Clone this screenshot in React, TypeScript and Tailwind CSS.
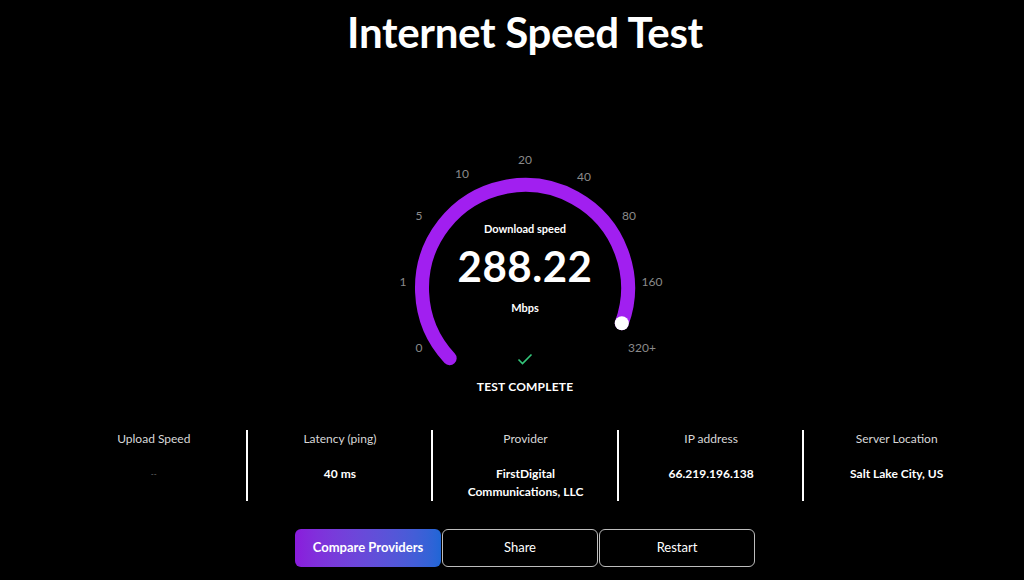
import React from 'react';

const ticks = [
  { label: '0', x: 44, y: 198 },
  { label: '1', x: 28, y: 132 },
  { label: '5', x: 44, y: 66 },
  { label: '10', x: 87, y: 24 },
  { label: '20', x: 150, y: 10 },
  { label: '40', x: 209, y: 27 },
  { label: '80', x: 254, y: 66 },
  { label: '160', x: 277, y: 132 },
  { label: '320+', x: 267, y: 198 },
];

const stats = [
  { label: 'Upload Speed', value: null },
  { label: 'Latency (ping)', value: ['40 ms'] },
  { label: 'Provider', value: ['FirstDigital', 'Communications, LLC'] },
  { label: 'IP address', value: ['66.219.196.138'] },
  { label: 'Server Location', value: ['Salt Lake City, US'] },
];

function Gauge() {
  // arc centre (150,138), radius 103
  const cx = 150;
  const cy = 138;
  const r = 103;
  const a0 = (137 * Math.PI) / 180;
  const a1 = (20 * Math.PI) / 180;
  const sx = cx + r * Math.cos(a0);
  const sy = cy + r * Math.sin(a0);
  const ex = cx + r * Math.cos(a1);
  const ey = cy + r * Math.sin(a1);

  return (
    <div className="relative w-[300px] h-[250px] mt-[94px] flex flex-col items-center">
      <svg className="absolute inset-0" width={300} height={250} viewBox="0 0 300 250">
        <path
          d={`M ${sx} ${sy} A ${r} ${r} 0 1 1 ${ex} ${ey}`}
          fill="none"
          stroke="#a11ff0"
          strokeWidth={14}
          strokeLinecap="round"
        />
        <circle cx={ex} cy={ey} r={7} fill="#fff" />
      </svg>
      {ticks.map((t) => (
        <span
          key={t.label}
          className="absolute -translate-x-1/2 -translate-y-1/2 text-[12px] leading-none text-[#8a8a8a]"
          style={{ left: t.x, top: t.y }}
        >
          {t.label}
        </span>
      ))}
      <p className="relative mt-[70px] text-[11px] leading-[18px] font-bold text-white">Download speed</p>
      <p className="relative mt-[7px] text-[42px] leading-[42px] font-bold text-white tracking-[0.5px]">288.22</p>
      <p className="relative mt-[12px] text-[11px] leading-[18px] font-bold text-white">Mbps</p>
      <svg className="relative mt-[36px]" width={16} height={12} viewBox="0 0 16 12">
        <polyline points="1.5,6.5 5.5,10.5 14.5,1.5" fill="none" stroke="#34c77b" strokeWidth={1.6} />
      </svg>
      <p className="relative mt-[13px] text-[12px] leading-[18px] font-bold text-white tracking-[0.2px]">TEST COMPLETE</p>
    </div>
  );
}

export default function App() {
  return (
    <div
      className="w-[1024px] h-[580px] bg-black text-white overflow-hidden flex flex-col items-center pl-[26px]"
      style={{ fontFamily: 'Lato, "Noto Sans", sans-serif' }}
    >
      <h1 className="pt-[8px] text-[42px] leading-[48px] font-bold tracking-[-0.3px]">Internet Speed Test</h1>

      <Gauge />

      <div className="mt-[30px] h-[70px] w-[928px] grid grid-cols-5">
        {stats.map((s, i) => (
          <div
            key={s.label}
            className={`flex flex-col items-center text-center ${i > 0 ? 'border-l-2 border-white -ml-[1px]' : ''}`}
          >
            <p className="text-[12px] leading-[18px] text-[#d8d8d8]">{s.label}</p>
            <div className="mt-[17px]">
              {s.value ? (
                s.value.map((v) => (
                  <p key={v} className="text-[12px] leading-[18px] font-bold text-white">
                    {v}
                  </p>
                ))
              ) : (
                <p className="text-[8px] leading-[18px] text-[#777]">--</p>
              )}
            </div>
          </div>
        ))}
      </div>

      <div className="mt-[29px] flex gap-[1px]">
        <button className="w-[146px] h-[38px] rounded-[6px] bg-gradient-to-r from-[#8a1bdc] to-[#1f66d6] text-[13px] font-bold text-white">
          Compare Providers
        </button>
        <button className="w-[156px] h-[38px] rounded-[6px] border border-[#bdbdbd] text-[13px] text-white">
          Share
        </button>
        <button className="w-[156px] h-[38px] rounded-[6px] border border-[#bdbdbd] text-[13px] text-white">
          Restart
        </button>
      </div>
    </div>
  );
}
